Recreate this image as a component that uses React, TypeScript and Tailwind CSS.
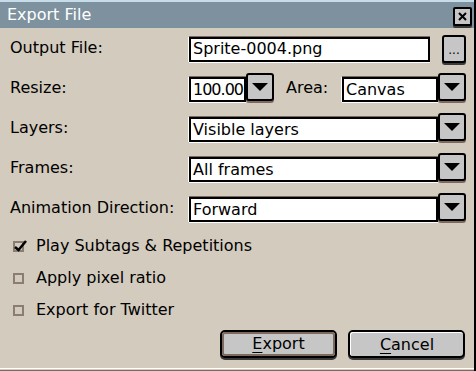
import React from 'react';

const font = { fontFamily: '"DejaVu Sans", "Liberation Sans", sans-serif' };

function Arrow() {
  return (
    <svg width="16" height="8" viewBox="0 0 16 8">
      <polygon points="0,0 16,0 8,8" fill="#000" />
    </svg>
  );
}

function DropButton() {
  return (
    <div className="w-[28px] h-[28px] shrink-0 bg-[#c6c6c6] border-2 border-black rounded-[3px] flex items-center justify-center shadow-[0_2px_0_#7d6a5e]">
      <Arrow />
    </div>
  );
}

function Field({ value, className = '' }: { value: string; className?: string }) {
  return (
    <div
      className={`h-[25px] bg-white border-2 border-black pl-[2px] flex items-center text-[16px] leading-none text-black whitespace-nowrap overflow-hidden shadow-[0_-1px_0_#7d6a5e,0_1px_0_#fff,-1px_0_0_#fff] ${className}`}
    >
      {value}
    </div>
  );
}

function Combo({ value, className = '', fieldClass = '' }: { value: string; className?: string; fieldClass?: string }) {
  return (
    <div className={`flex items-start h-[30px] ${className}`}>
      <Field value={value} className={`flex-1 mt-[4px] ${fieldClass}`} />
      <DropButton />
    </div>
  );
}

function Check({ checked, label }: { checked?: boolean; label: string }) {
  return (
    <div className="h-[32px] flex items-center pl-[3px]">
      <div className="relative w-[11px] h-[11px] border-2 border-[#8c7d72]">
        {checked && (
          <svg className="absolute -left-[2px] -top-[4px]" width="15" height="14" viewBox="0 0 15 14">
            <path d="M2 8 L5.5 11 L13 2" stroke="#000" strokeWidth="2.5" fill="none" />
          </svg>
        )}
      </div>
      <span className="ml-[12px] text-[16px] leading-none text-black">{label}</span>
    </div>
  );
}

function DialogButton({ label, focused }: { label: string; focused?: boolean }) {
  return (
    <div className="w-[117px] h-[28px] bg-[#c6c6c6] border-2 border-black rounded-[5px] shadow-[0_2px_0_#3a3a3a]">
      <div
        className={`w-full h-full rounded-[3px] flex items-center justify-center text-[16px] leading-none text-black ${
          focused ? 'border-2 border-[#7d6a5e]' : 'border-t border-l border-white'
        }`}
      >
        <span className="underline decoration-1 underline-offset-[3px] [text-decoration-skip-ink:none]">{label[0]}</span>
        <span>{label.slice(1)}</span>
      </div>
    </div>
  );
}

export default function App() {
  return (
    <div className="w-[476px] h-[371px] bg-[#d3cbbe] flex flex-col border-r-2 border-black overflow-hidden" style={font}>
      {/* title bar */}
      <div className="h-[28px] shrink-0 bg-[#7d929e] border-t-2 border-[#c6dce8] flex items-center justify-between pl-[7px] pr-[2px]">
        <span className="text-white text-[16px] leading-none">Export File</span>
        <div className="w-[19px] h-[19px] mt-[2px] bg-[#c6c6c6] border-2 border-black rounded-[2px] shadow-[0_2px_0_#3a3a3a] flex items-center justify-center">
          <svg width="9" height="9" viewBox="0 0 9 9">
            <path d="M1 1 L8 8 M8 1 L1 8" stroke="#000" strokeWidth="2" />
          </svg>
        </div>
      </div>

      <div className="flex-1 flex flex-col pl-[10px] pr-[8px] mt-[2px]">
        <div className="grid grid-cols-[179px_1fr] text-[16px] leading-none text-black">
          <div className="h-[38px] flex items-center pb-[2px]">Output File:</div>
          <div className="h-[38px] flex items-center gap-[12px]">
            <Field value="Sprite-0004.png" className="flex-1" />
            <div className="w-[24px] h-[28px] bg-[#c6c6c6] border-2 border-black rounded-[3px] shadow-[0_2px_0_#3a3a3a] flex items-end justify-center pb-[5px] text-[12px] leading-none">
              ...
            </div>
          </div>

          <div className="h-[40px] flex items-center">Resize:</div>
          <div className="h-[40px] flex items-center">
            <Combo value="100.00" className="w-[85px]" fieldClass="pl-[1px] tracking-[-1px]" />
            <span className="ml-[12px] w-[56px]">Area:</span>
            <Combo value="Canvas" className="flex-1" />
          </div>

          <div className="h-[40px] flex items-center">Layers:</div>
          <div className="h-[40px] flex items-center">
            <Combo value="Visible layers" className="flex-1" />
          </div>

          <div className="h-[40px] flex items-center">Frames:</div>
          <div className="h-[40px] flex items-center">
            <Combo value="All frames" className="flex-1" />
          </div>

          <div className="h-[40px] flex items-center">Animation Direction:</div>
          <div className="h-[40px] flex items-center">
            <Combo value="Forward" className="flex-1" />
          </div>
        </div>

        <div className="mt-[2px]">
          <Check checked label="Play Subtags & Repetitions" />
          <Check label="Apply pixel ratio" />
          <Check label="Export for Twitter" />
        </div>

        <div className="flex justify-end gap-[11px] mt-[4px] pr-[1px]">
          <DialogButton label="Export" focused />
          <DialogButton label="Cancel" />
        </div>
      </div>

      <div className="h-[3px] shrink-0 border-t border-white border-b-[1px] border-b-[#7d6a5e]" />
    </div>
  );
}
